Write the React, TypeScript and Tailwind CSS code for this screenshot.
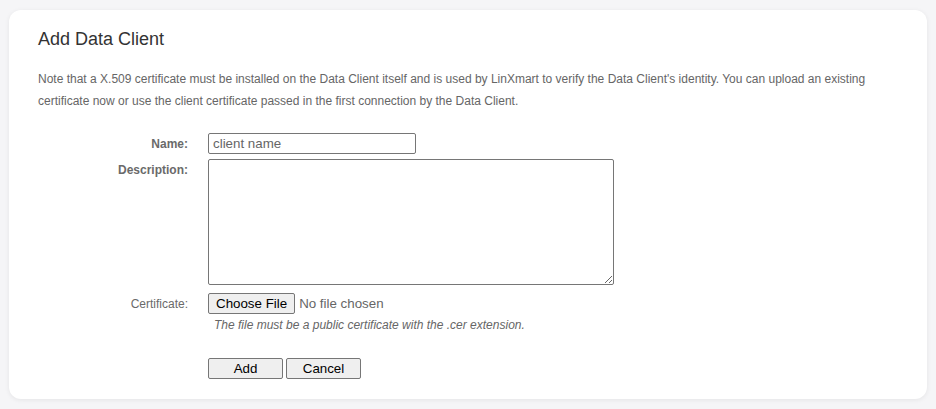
import React from 'react';

const font = { fontFamily: '"Liberation Sans", Arial, sans-serif' };

function Label({ children, bold = true, className = '' }: { children: React.ReactNode; bold?: boolean; className?: string }) {
  return (
    <div className={`w-[150px] shrink-0 text-right text-[12px] leading-[14px] text-[#6a6a6a] ${bold ? 'font-bold' : ''} ${className}`}>
      {children}
    </div>
  );
}

export default function App() {
  return (
    <div className="min-h-screen bg-[#f5f5f7] pt-[10px] pb-[11px] px-[9px]" style={font}>
      <div className="bg-white rounded-[12px] shadow-[0_1px_5px_rgba(0,0,0,0.07)] px-[29px] pt-[18px] pb-[20px]">
        <h1 className="text-[18px] leading-[22px] text-[#333]">Add Data Client</h1>

        <p className="mt-[18px] text-[12px] leading-[22px] text-[#666]">
          Note that a X.509 certificate must be installed on the Data Client itself and is used by LinXmart to verify the Data Client's identity. You can upload an existing certificate now or use the client certificate passed in the first connection by the Data Client.
        </p>

        <div className="mt-[21px] flex flex-col">
          <div className="flex items-center gap-5">
            <Label>Name:</Label>
            <input
              type="text"
              placeholder="client name"
              className="w-[208px] h-[21px] border border-[#767676] rounded-[2px] px-[4px] text-[13.333px] text-[#333] placeholder:text-[#666] outline-none"
            />
          </div>

          <div className="flex items-start gap-5 mt-[5px]">
            <Label className="pt-[4px]">Description:</Label>
            <textarea className="w-[406px] h-[126px] border border-[#767676] rounded-[2px] px-[4px] text-[13.333px] outline-none resize" />
          </div>

          <div className="flex items-center gap-5 mt-[8px]">
            <Label bold={false}>Certificate:</Label>
            <div className="flex items-center">
              <button className="h-[21px] px-[7px] border border-[#767676] rounded-[2px] bg-[#efefef] text-[13.333px] leading-[15px] text-black">
                Choose File
              </button>
              <span className="ml-[4px] text-[13.333px] text-[#666]">No file chosen</span>
            </div>
          </div>

          <div className="flex gap-5 mt-[4px]">
            <div className="w-[150px] shrink-0" />
            <div className="pl-[6px] text-[12px] leading-[14px] italic text-[#666]">
              The file must be a public certificate with the .cer extension.
            </div>
          </div>

          <div className="flex gap-5 mt-[26px]">
            <div className="w-[150px] shrink-0" />
            <div className="flex gap-[3px]">
              <button className="w-[75px] h-[21px] border border-[#767676] rounded-[2px] bg-[#efefef] text-[13.333px] leading-[15px] text-black">
                Add
              </button>
              <button className="w-[75px] h-[21px] border border-[#767676] rounded-[2px] bg-[#efefef] text-[13.333px] leading-[15px] text-black">
                Cancel
              </button>
            </div>
          </div>
        </div>
      </div>
    </div>
  );
}
